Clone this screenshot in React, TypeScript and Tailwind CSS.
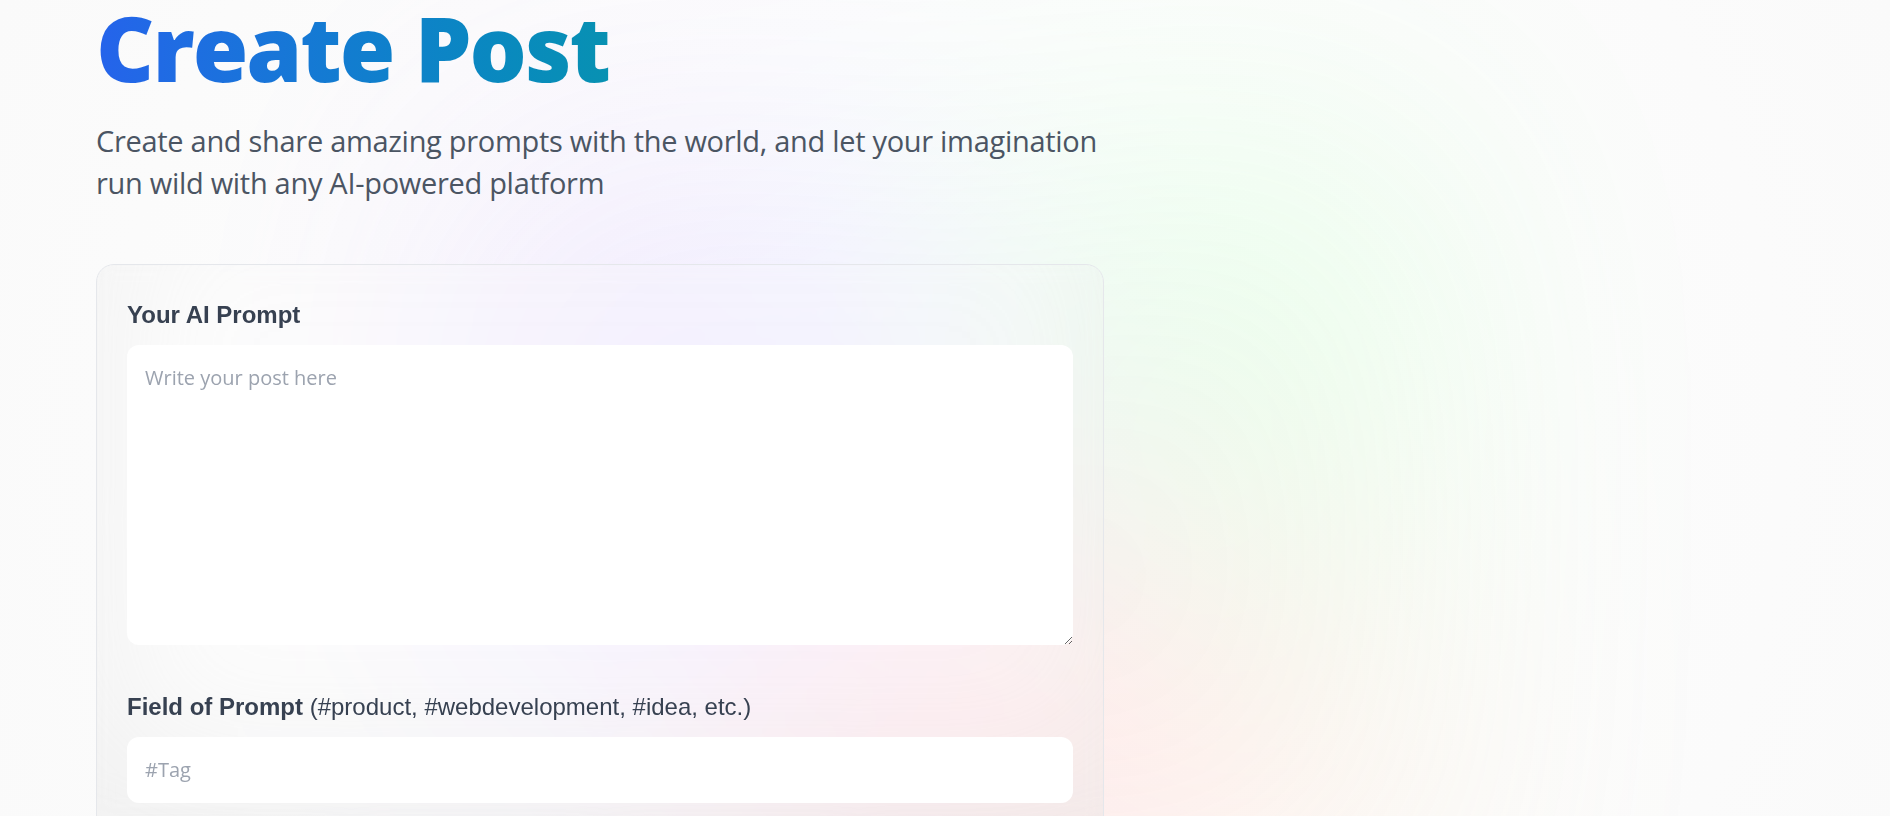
import { useState } from "react";

const sans = "font-['Open_Sans','Noto_Sans',sans-serif]";
const arial = "font-['Liberation_Sans',Arial,sans-serif]";

export default function App() {
  const [post, setPost] = useState({ prompt: "", tag: "" });

  return (
    <div className="relative min-h-screen w-full overflow-hidden bg-[#fafafa]">
      {/* soft background glow */}
      <div className="pointer-events-none absolute inset-0 bg-[radial-gradient(circle,rgba(255,255,255,1)_0,#fafafa_100%)]" />
      <div className="pointer-events-none absolute left-[465px] top-[120px] h-[816px] w-[960px] bg-[radial-gradient(at_97%_21%,hsla(125,98%,72%,1)_0px,transparent_50%),radial-gradient(at_52%_99%,hsla(354,98%,61%,1)_0px,transparent_50%),radial-gradient(at_10%_29%,hsla(256,96%,67%,1)_0px,transparent_50%),radial-gradient(at_97%_96%,hsla(38,60%,74%,1)_0px,transparent_50%),radial-gradient(at_33%_50%,hsla(222,67%,73%,1)_0px,transparent_50%),radial-gradient(at_79%_53%,hsla(343,68%,79%,1)_0px,transparent_50%)] opacity-15 blur-[150px] saturate-150" />

      <section className="relative z-10 flex w-full flex-col items-start px-[96px] pb-[60px]">
        <h1 className={`${sans} mt-[2px] text-[90px] font-extrabold leading-[90px] tracking-[-2px] text-left`}>
          <span className="bg-gradient-to-r from-[#2563eb] to-[#0891b2] bg-clip-text text-transparent">
            Create Post
          </span>
        </h1>
        <p className={`${sans} mt-[28px] max-w-[1008px] text-left text-[29px] leading-[42px] tracking-[-0.3px] text-[#4b5563]`}>
          Create and share amazing prompts with the world, and let your imagination run wild with any
          AI-powered platform
        </p>

        <form className="mt-[60px] flex w-[1008px] flex-col gap-[42px] rounded-[18px] border border-[#e5e7eb] bg-white/20 p-[30px] shadow-[inset_15px_-75px_141px_0_rgba(199,199,199,0.2)] backdrop-blur">
          <label className="block">
            <span className={`${arial} block pt-[2px] text-[24px] font-bold leading-[36px] text-[#374151]`}>
              Your AI Prompt
            </span>
            <textarea
              value={post.prompt}
              onChange={(e) => setPost({ ...post, prompt: e.target.value })}
              placeholder="Write your post here"
              className={`${sans} mt-[12px] flex h-[300px] w-full rounded-[12px] bg-white p-[18px] text-[20px] leading-[30px] text-[#6b7280] outline-0 placeholder:text-[#9ca3af]`}
            />
          </label>

          <label className="block">
            <span className={`${arial} block pt-[2px] text-[24px] font-bold leading-[36px] text-[#374151]`}>
              Field of Prompt{" "}
              <span className="font-normal">(#product, #webdevelopment, #idea, etc.)</span>
            </span>
            <input
              value={post.tag}
              onChange={(e) => setPost({ ...post, tag: e.target.value })}
              placeholder="#Tag"
              className={`${sans} mt-[12px] flex w-full rounded-[12px] bg-white p-[18px] text-[20px] leading-[30px] text-[#6b7280] outline-0 placeholder:text-[#9ca3af]`}
            />
          </label>
        </form>
      </section>
    </div>
  );
}
